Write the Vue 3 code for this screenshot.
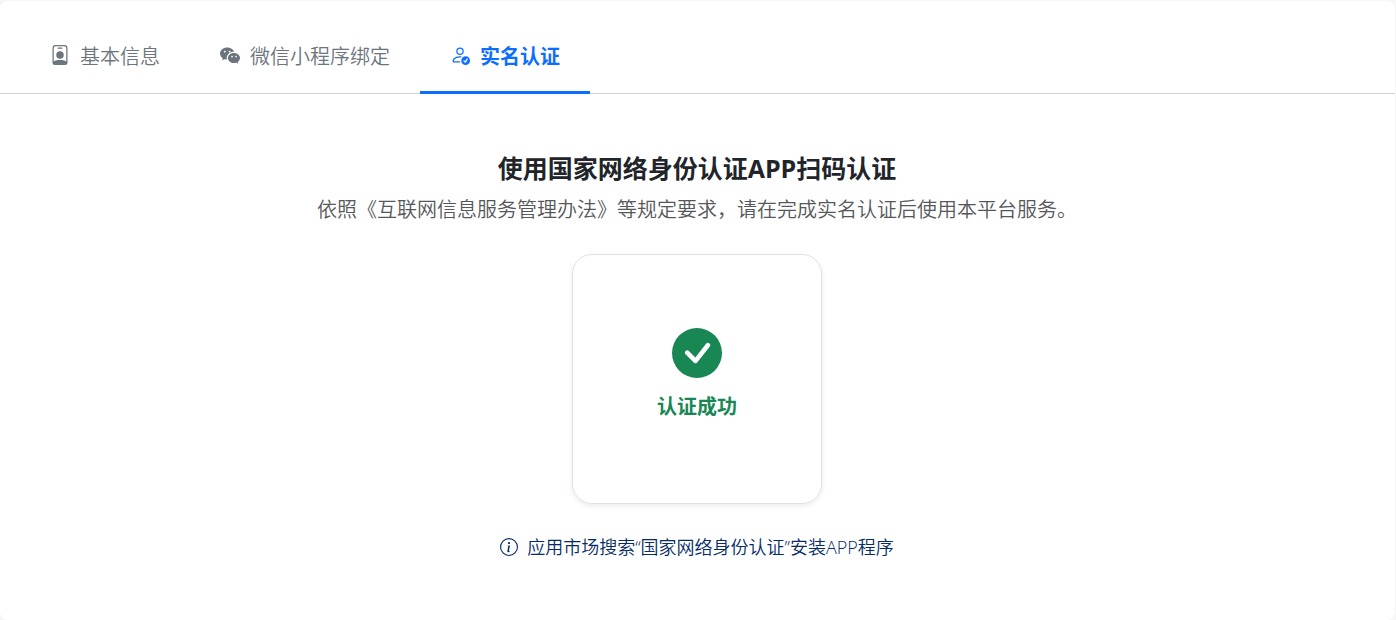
<script setup>
import { ref } from 'vue'

const active = ref('realname')

const tabs = [
  {
    id: 'basic',
    label: '基本信息',
    paths: [
      'M6.5 2a.5.5 0 0 0 0 1h3a.5.5 0 0 0 0-1zM11 8a3 3 0 1 1-6 0 3 3 0 0 1 6 0',
      'M4.5 0A2.5 2.5 0 0 0 2 2.5V14a2 2 0 0 0 2 2h8a2 2 0 0 0 2-2V2.5A2.5 2.5 0 0 0 11.5 0zM3 2.5A1.5 1.5 0 0 1 4.5 1h7A1.5 1.5 0 0 1 13 2.5v10.795a4.2 4.2 0 0 0-.776-.492C11.392 12.387 10.063 12 8 12s-3.392.387-4.224.803a4.2 4.2 0 0 0-.776.492z'
    ]
  },
  {
    id: 'wechat',
    label: '微信小程序绑定',
    paths: [
      'M11.176 14.429c-2.665 0-4.826-1.8-4.826-4.018 0-2.22 2.159-4.02 4.824-4.02S16 8.191 16 10.411c0 1.21-.65 2.301-1.666 3.036a.32.32 0 0 0-.12.366l.218.81a.6.6 0 0 1 .029.117.166.166 0 0 1-.162.162.2.2 0 0 1-.092-.03l-1.057-.61a.5.5 0 0 0-.256-.074.5.5 0 0 0-.142.021 5.7 5.7 0 0 1-1.576.22M9.064 9.542a.647.647 0 1 0 .557-1 .645.645 0 0 0-.646.647.6.6 0 0 0 .09.353Zm3.232.001a.646.646 0 1 0 .546-1 .645.645 0 0 0-.644.644.63.63 0 0 0 .098.356',
      'M0 6.826c0 1.455.781 2.765 2.001 3.656a.385.385 0 0 1 .143.439l-.161.6-.1.373a.5.5 0 0 0-.032.14.19.19 0 0 0 .193.193q.06 0 .111-.029l1.268-.733a.6.6 0 0 1 .308-.088q.088 0 .171.025a6.8 6.8 0 0 0 1.625.26 4.5 4.5 0 0 1-.177-1.251c0-2.936 2.785-5.02 5.824-5.02l.15.002C10.587 3.429 8.392 2 5.796 2 2.596 2 0 4.16 0 6.826m4.632-1.555a.77.77 0 1 1-1.54 0 .77.77 0 0 1 1.54 0m3.875 0a.77.77 0 1 1-1.54 0 .77.77 0 0 1 1.54 0'
    ]
  },
  {
    id: 'realname',
    label: '实名认证',
    paths: [
      'M12.5 16a3.5 3.5 0 1 0 0-7 3.5 3.5 0 0 0 0 7m1.679-4.493-1.335 2.226a.75.75 0 0 1-1.174.144l-.774-.773a.5.5 0 0 1 .708-.708l.547.548 1.17-1.951a.5.5 0 1 1 .858.514M11 5a3 3 0 1 1-6 0 3 3 0 0 1 6 0M8 7a2 2 0 1 0 0-4 2 2 0 0 0 0 4',
      'M8.256 14a4.5 4.5 0 0 1-.229-1.004H3c.001-.246.154-.986.832-1.664C4.484 10.68 5.711 10 8 10q.39 0 .74.025c.226-.341.496-.65.804-.918Q8.844 9.002 8 9c-5 0-6 3-6 4s1 1 1 1z'
    ]
  }
]
</script>

<template>
  <main class="panel">
    <nav class="tabs" role="tablist">
      <button
        v-for="tab in tabs"
        :key="tab.id"
        type="button"
        role="tab"
        class="tab"
        :class="{ active: tab.id === active }"
        :aria-selected="tab.id === active"
        @click="active = tab.id"
      >
        <svg class="tab-icon" viewBox="0 0 16 16" aria-hidden="true">
          <path v-for="d in tab.paths" :key="d" :d="d" />
        </svg>
        <span>{{ tab.label }}</span>
      </button>
    </nav>

    <section class="content">
      <h1 class="title">使用国家网络身份认证APP扫码认证</h1>
      <p class="subtitle">依照《互联网信息服务管理办法》等规定要求，请在完成实名认证后使用本平台服务。</p>

      <div class="status">
        <svg class="status-icon" viewBox="0 0 16 16" aria-hidden="true">
          <path d="M16 8A8 8 0 1 1 0 8a8 8 0 0 1 16 0m-3.97-3.03a.75.75 0 0 0-1.08.022L7.477 9.417 5.384 7.323a.75.75 0 0 0-1.06 1.06L6.97 11.03a.75.75 0 0 0 1.079-.02l3.992-4.99a.75.75 0 0 0-.01-1.05z" />
        </svg>
        <strong class="status-text">认证成功</strong>
      </div>

      <p class="hint">
        <svg class="hint-icon" viewBox="0 0 16 16" aria-hidden="true">
          <path d="M8 15A7 7 0 1 1 8 1a7 7 0 0 1 0 14m0 1A8 8 0 1 0 8 0a8 8 0 0 0 0 16" />
          <path d="m8.930 6.588-2.290.287-.082.380.450.083c.294.070.352.176.288.469l-.738 3.468c-.194.897.105 1.319.808 1.319.545 0 1.178-.252 1.465-.598l.088-.416c-.200.176-.492.246-.686.246-.275 0-.375-.193-.304-.533zM9 4.500a1 1 0 1 1-2 0 1 1 0 0 1 2 0" />
        </svg>
        <span>应用市场搜索“国家网络身份认证”安装APP程序</span>
      </p>
    </section>
  </main>
</template>

<style>
body {
  background: #f6f6f7;
}
</style>

<style scoped>
.panel {
  box-sizing: border-box;
  min-height: calc(100vh - 1px);
  margin: 1px 1px 0 0;
  background: #fff;
  border-radius: 8px;
  font-family: "Open Sans", "Noto Sans CJK SC", sans-serif;
  font-weight: 350;
  color: #212529;
}

.tabs {
  display: flex;
  padding: 18px 20px 0;
  border-bottom: 1px solid #d0d2d4;
}

.tab {
  display: flex;
  align-items: center;
  gap: 10px;
  margin-bottom: -1px;
  padding: 23px 30px 19px;
  border: 0;
  border-bottom: 3px solid transparent;
  background: none;
  color: #6c757d;
  font-family: inherit;
  font-size: 20px;
  font-weight: inherit;
  line-height: 30px;
  cursor: pointer;
}

.tab.active {
  border-bottom-color: #0d6efd;
  color: #0d6efd;
  font-weight: 700;
}

.tab-icon {
  width: 20px;
  height: 20px;
  margin-bottom: 4px;
  fill: currentColor;
}

.content {
  display: flex;
  flex-direction: column;
  align-items: center;
  padding: 59px 21px 40px 20px;
}

.title {
  margin: 0;
  font-size: 25px;
  line-height: 30px;
  font-weight: 700;
}

.subtitle {
  margin: 12px 0 29px;
  color: #55575a;
  font-size: 20px;
  line-height: 30px;
}

.status {
  box-sizing: border-box;
  display: flex;
  flex-direction: column;
  align-items: center;
  justify-content: center;
  gap: 14px;
  width: 250px;
  height: 250px;
  padding-bottom: 8px;
  border: 1px solid #dee2e6;
  border-radius: 20px;
  box-shadow: 0 2px 5px rgba(0, 0, 0, 0.08);
}

.status-icon {
  width: 50px;
  height: 50px;
  fill: #198754;
}

.status-text {
  color: #198754;
  font-size: 20px;
  font-weight: 700;
  line-height: 30px;
}

.hint {
  display: flex;
  align-items: center;
  gap: 9px;
  margin: 29px 0 0;
  color: #052c65;
  font-size: 18px;
  line-height: 28px;
}

.hint-icon {
  width: 18px;
  height: 18px;
  fill: currentColor;
}
</style>
